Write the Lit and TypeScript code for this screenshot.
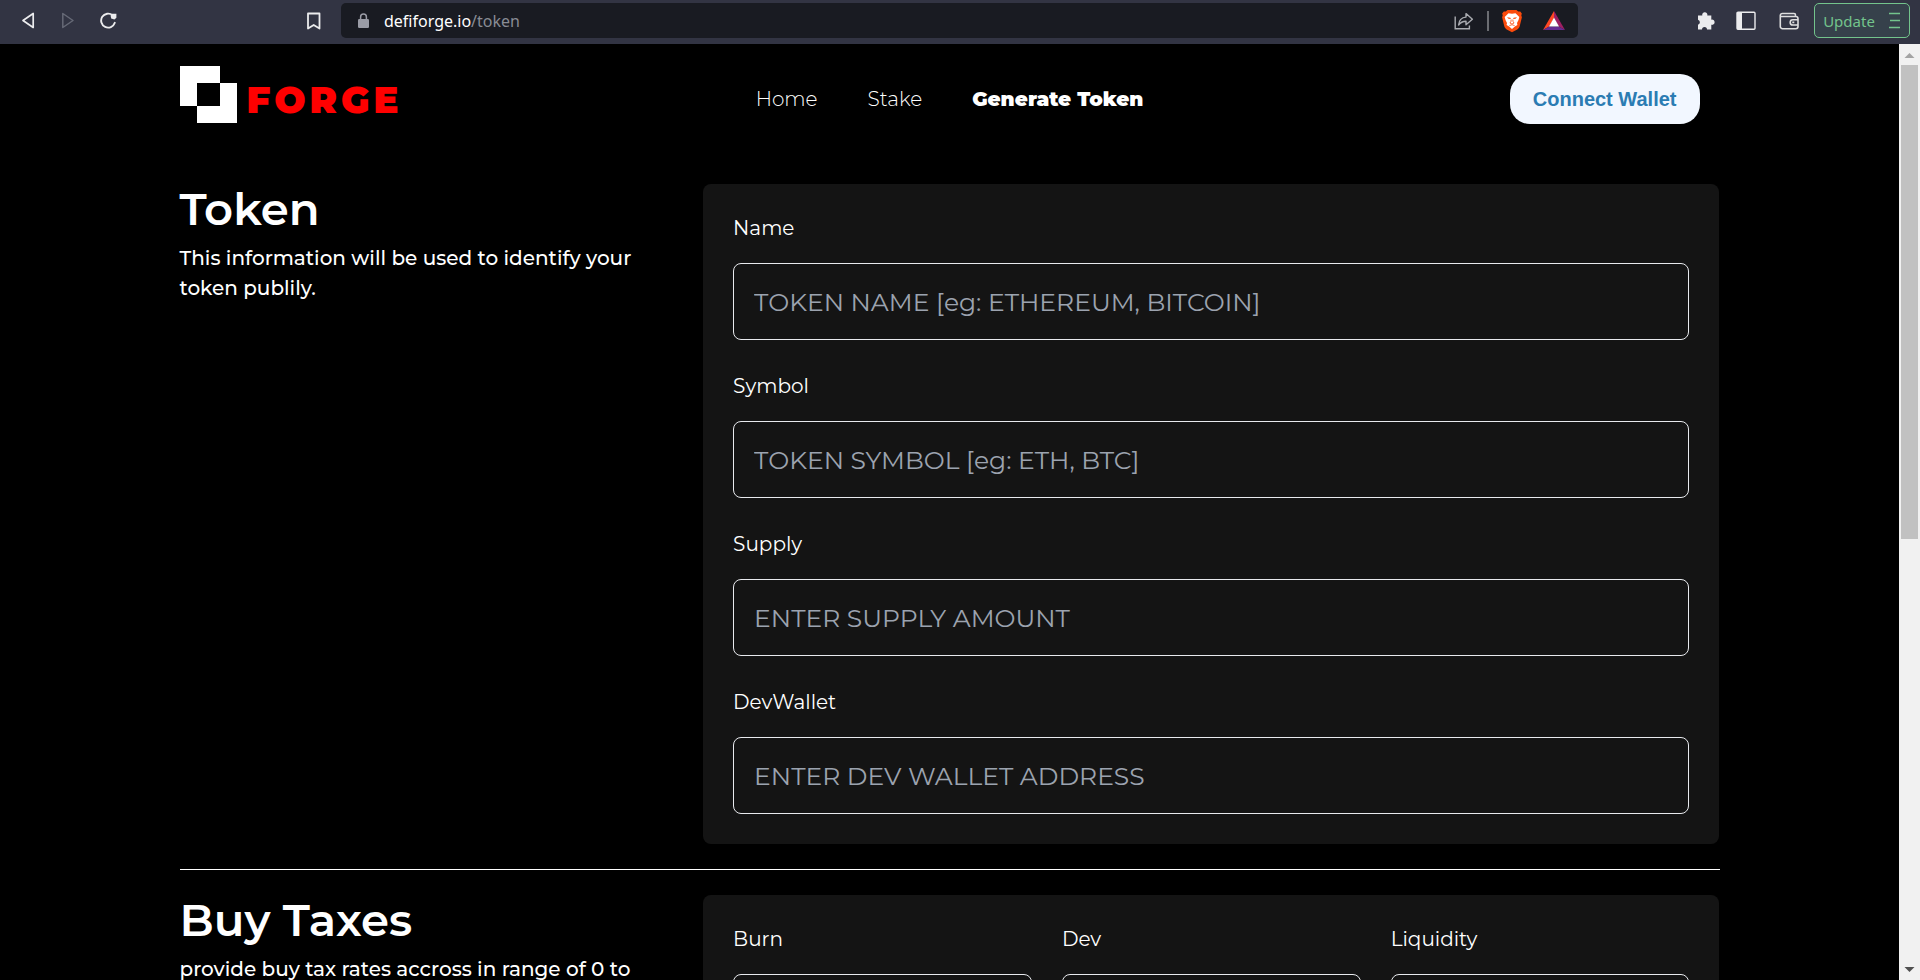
import { LitElement, html, css } from "lit";
import { customElement, property } from "lit/decorators.js";

@customElement("browser-bar")
class BrowserBar extends LitElement {
  static styles = css`
    :host {
      display: flex;
      align-items: flex-start;
      box-sizing: border-box;
      height: 44px;
      padding: 3px 10px 0 20px;
      background: #323443;
      font-family: "Noto Sans", "Open Sans", sans-serif;
    }
    .group {
      display: flex;
      align-items: center;
      height: 35px;
    }
    .nav {
      gap: 24px;
      flex: 0 0 280px;
    }
    .mark {
      flex: 0 0 41px;
    }
    .address {
      display: flex;
      align-items: center;
      flex: 1 1 auto;
      height: 35px;
      box-sizing: border-box;
      padding: 0 12px 0 15px;
      border-radius: 5px;
      background: #191b22;
    }
    .url {
      flex: 1 1 auto;
      min-width: 0;
      margin-left: 13px;
      font-size: 16px;
      color: #888b94;
    }
    .host {
      color: #fff;
    }
    .divider {
      width: 2px;
      height: 20px;
      margin: 0 12px 0 13px;
      background: #6b6d72;
    }
    .bat {
      margin-left: 19px;
    }
    .tools {
      flex: 0 0 auto;
      gap: 20px;
      margin-left: 116px;
    }
    button {
      display: flex;
      align-items: center;
      justify-content: center;
      padding: 0;
      border: 0;
      background: none;
      color: #ececee;
      font: inherit;
    }
    button.update {
      gap: 14px;
      box-sizing: border-box;
      width: 96px;
      height: 35px;
      margin-left: 14px;
      border: 1px solid #73c48c;
      border-radius: 5px;
      background: #36414b;
      color: #73c48c;
      font-size: 15px;
      line-height: 18px;
    }
    svg {
      display: block;
    }
  `;

  render() {
    return html`
      <div class="group nav">
        <button aria-label="Back">
          <svg width="16" height="20" viewBox="0 0 16 20" fill="none" stroke="#ececee" stroke-width="1.7" stroke-linejoin="round"><path d="M13.2 2.500v14L3 9.500z" /></svg>
        </button>
        <button aria-label="Forward">
          <svg width="16" height="20" viewBox="0 0 16 20" fill="none" stroke="#666976" stroke-width="1.5" stroke-linejoin="round"><path d="M2.8 2.500v14L13 9.500z" /></svg>
        </button>
        <button aria-label="Reload">
          <svg width="18" height="20" viewBox="0 0 18 20" fill="none" stroke="#ececee" stroke-width="1.9" stroke-linecap="round"><path d="M12.600 4.200A7 7 0 1 0 14.800 11.800" /><path d="M10.600 4.400l1.400-1.600h4.400v4l-2 1.600-3.200-1z" fill="#ececee" stroke="none" /></svg>
        </button>
      </div>
      <div class="group mark">
        <button aria-label="Bookmark">
          <svg width="28" height="20" viewBox="0 0 28 20" fill="none" stroke="#ececee" stroke-width="1.8" stroke-linejoin="round"><path d="M8 2.500h11.500v15L13.700 14 8 17.500z" /></svg>
        </button>
      </div>
      <div class="address">
        <svg width="15" height="18" viewBox="0 0 15 18"><rect x="2" y="7" width="11" height="9" rx="1.2" fill="#9a9ca6" /><path d="M4.600 7.500V5a2.900 2.900 0 0 1 5.800 0v2.500" fill="none" stroke="#9a9ca6" stroke-width="1.5" /></svg>
        <span class="url"><span class="host">defiforge.io</span>/token</span>
        <button aria-label="Share">
          <svg width="20" height="20" viewBox="0 0 20 20" fill="none" stroke="#a9abb0" stroke-width="1.4"><path d="M1.200 5.500v12.300h14.200v-3.400" /><path d="M4.600 14c.4-4.600 3.100-7.600 7.400-7.900V2.600l6.400 5.700-6.400 5.400v-3.500c-3.200 0-5.600 1.200-7.400 3.800z" stroke-linejoin="round" /></svg>
        </button>
        <span class="divider"></span>
        <button aria-label="Brave Shields">
          <svg width="22" height="24" viewBox="0 0 22 24">
            <path d="M6.500 1h9l1.700 1.600 2-.2 1.600 2.200-.5 2 .6 1.700-2.200 9c-.4 1.500-1.200 2.400-2.400 3.200L11 23.200l-5.300-2.700c-1.200-.8-2-1.700-2.400-3.200L1.100 8.300l.6-1.700-.5-2 1.600-2.200 2 .2z" fill="#fb4b0c" />
            <path d="M7.500 4.200L11 4.800l3.500-.6 3.800 3.700-.8 3.100-1.500 3 .4 2-2.500 1.600-2.900 2.500-2.900-2.500L5.600 16l.4-2-1.500-3-.8-3.100z" fill="#fff" />
            <path d="M6 8.300l3.400.4.500 1.400-2.400-.3zM16 8.300l-3.400.4-.5 1.400 2.400-.3z" fill="#fb4b0c" />
            <path d="M10.200 10.500l-.3 2.300-1 1.200 2.100 1 2.100-1-1-1.200-.3-2.300M8.400 16.600l2.600-.9 2.600.9" fill="none" stroke="#fb4b0c" stroke-width=".8" />
          </svg>
        </button>
        <button class="bat" aria-label="Brave Rewards">
          <svg width="24" height="22" viewBox="0 0 24 22">
            <path d="M12 1v7L7.200 16.500 1 20z" fill="#ff4724" />
            <path d="M12 1l11 19-6.200-3.500L12 8z" fill="#9e1f63" />
            <path d="M1 20l6.200-3.500h9.600L23 20z" fill="#662d91" />
            <path d="M12 7.500l5 9H7z" fill="#fff" />
          </svg>
        </button>
      </div>
      <div class="group tools">
        <button aria-label="Extensions">
          <svg width="22" height="22" viewBox="0 0 22 22"><path d="M4 5.500h4.300a2.600 2.600 0 1 1 5 0h4v4.200a2.600 2.600 0 1 1 0 5v4.800H13a2.500 2.500 0 0 0-5 0H4v-4.700a2.600 2.600 0 0 0 0-5z" fill="#ececee" /></svg>
        </button>
        <button aria-label="Sidebar">
          <svg width="22" height="22" viewBox="0 0 22 22"><rect x="1" y="2.200" width="18" height="17" rx="1" fill="none" stroke="#ececee" stroke-width="1.4" /><path d="M1 2.200h5v17H1z" fill="#ececee" /></svg>
        </button>
        <button aria-label="Wallet">
          <svg width="22" height="22" viewBox="0 0 22 22" fill="none" stroke="#dededf" stroke-width="1.6"><path d="M17.500 6.500V5a1.500 1.500 0 0 0-1.500-1.500H4.300a2 2 0 0 0-2 2v11a2.200 2.200 0 0 0 2.200 2.200h13.300a2.200 2.200 0 0 0 2.200-2.200V8.700a2.200 2.200 0 0 0-2.200-2.200H2.500" /><path d="M20 9.800h-5.200a2.600 2.600 0 0 0 0 5.200H20M14.300 12.400h2" /></svg>
        </button>
      </div>
      <button class="update">
        Update
        <svg width="12" height="18" viewBox="0 0 12 18" stroke="#73c48c" stroke-width="1.6"><path d="M0 1.500h11M1 8.500h10M0 15.500h11" /></svg>
      </button>
    `;
  }
}

@customElement("form-field")
class FormField extends LitElement {
  static styles = css`
    :host {
      display: flex;
      flex-direction: column;
      gap: 20px;
      min-width: 0;
    }
    label {
      font-size: 20px;
      line-height: 29px;
      color: #fff;
    }
    input {
      box-sizing: border-box;
      width: 100%;
      height: 77px;
      padding: 0 20px;
      border: 1px solid #e8eaee;
      border-radius: 8px;
      background: transparent;
      color: #fff;
      font-family: inherit;
      font-size: 25px;
      font-weight: 400;
    }
    input::placeholder {
      color: #9ca3af;
      opacity: 1;
    }
  `;

  @property() label = "";
  @property() hint = "";

  render() {
    return html`
      <label for="field">${this.label}</label>
      <input id="field" type="text" placeholder=${this.hint} />
    `;
  }
}

const tokenFields = [
  ["Name", "TOKEN NAME [eg: ETHEREUM, BITCOIN]"],
  ["Symbol", "TOKEN SYMBOL [eg: ETH, BTC]"],
  ["Supply", "ENTER SUPPLY AMOUNT"],
  ["DevWallet", "ENTER DEV WALLET ADDRESS"],
];
const taxFields = ["Burn", "Dev", "Liquidity"];

@customElement("app-root")
class AppRoot extends LitElement {
  static styles = css`
    :host {
      display: flex;
      flex-direction: column;
      height: 100vh;
      overflow: hidden;
      background: #000;
      color: #fff;
      font-family: Montserrat, Inter, sans-serif;
    }
    .viewport {
      display: flex;
      flex: 1 1 0;
      min-height: 0;
    }
    .page {
      flex: 1 1 auto;
      min-width: 0;
      overflow-y: auto;
      scrollbar-width: none;
    }
    .container {
      max-width: 1540px;
      margin: 0 auto;
    }
    header {
      display: grid;
      grid-template-columns: 1fr auto 1fr;
      align-items: center;
      box-sizing: border-box;
      height: 110px;
      margin-bottom: 30px;
    }
    .brand {
      display: flex;
      align-items: center;
      gap: 10px;
      justify-self: start;
      color: #f00;
      font-size: 37px;
      font-weight: 900;
      line-height: 1;
      letter-spacing: 4px;
      text-decoration: none;
    }
    .logo {
      display: block;
      margin-bottom: 10px;
    }
    nav {
      display: flex;
      gap: 50px;
    }
    nav a {
      color: #fff;
      font-size: 20px;
      font-weight: 300;
      text-decoration: none;
    }
    nav a.active {
      font-weight: 900;
    }
    .connect {
      justify-self: end;
      height: 50px;
      margin-right: 20px;
      padding: 0 23px;
      border: 0;
      border-radius: 20px;
      background: #f2f7ff;
      color: #2b7cb3;
      font: bold 20px "Liberation Sans", Arial, sans-serif;
    }
    .section {
      display: grid;
      grid-template-columns: 34fr 66fr;
    }
    .intro {
      padding-right: 48px;
    }
    h2 {
      margin: 0 0 9px;
      font-size: 45px;
      font-weight: 600;
      line-height: 50px;
    }
    p {
      margin: 0;
      font-size: 20px;
      font-weight: 500;
      line-height: 30px;
    }
    .card {
      display: flex;
      flex-direction: column;
      gap: 32px;
      padding: 30px;
      border-radius: 8px;
      background: #141414;
    }
    .card.taxes {
      display: grid;
      grid-template-columns: repeat(3, 1fr);
      gap: 30px;
    }
    hr {
      height: 1px;
      margin: 25px 0;
      border: 0;
      background: #fff;
    }
    .scrollbar {
      display: flex;
      flex: 0 0 21px;
      flex-direction: column;
      align-items: center;
      background: #f1f1f1;
    }
    .arrow {
      display: block;
      flex: 0 0 21px;
    }
    .track {
      flex: 1 1 auto;
      width: 17px;
    }
    .thumb {
      height: 53%;
      background: #c1c1c1;
    }
  `;

  render() {
    return html`
      <browser-bar></browser-bar>
      <div class="viewport">
        <div class="page">
          <div class="container">
            <header>
              <a class="brand" href="#">
                <svg class="logo" width="57" height="57" viewBox="0 0 57 57"><path fill="#fff" fill-rule="evenodd" d="M0 0h40v17h17v40H17V40H0zM17 17v23h23V17z" /></svg>
                <span>FORGE</span>
              </a>
              <nav>
                <a href="#home">Home</a>
                <a href="#stake">Stake</a>
                <a class="active" href="#token">Generate Token</a>
              </nav>
              <button class="connect">Connect Wallet</button>
            </header>
            <section class="section">
              <div class="intro">
                <h2>Token</h2>
                <p>This information will be used to identify your token publily.</p>
              </div>
              <div class="card">
                ${tokenFields.map(([label, hint]) => html`<form-field .label=${label} .hint=${hint}></form-field>`)}
              </div>
            </section>
            <hr />
            <section class="section">
              <div class="intro">
                <h2>Buy Taxes</h2>
                <p>provide buy tax rates accross in range of 0 to 30</p>
              </div>
              <div class="card taxes">
                ${taxFields.map((label) => html`<form-field .label=${label}></form-field>`)}
              </div>
            </section>
          </div>
        </div>
        <div class="scrollbar">
          <svg class="arrow" width="21" height="21" viewBox="0 0 21 21"><path d="M10.500 9l5 5h-10z" fill="#a3a3a3" /></svg>
          <div class="track"><div class="thumb"></div></div>
          <svg class="arrow" width="21" height="21" viewBox="0 0 21 21"><path d="M10.500 13l5-5h-10z" fill="#505050" /></svg>
        </div>
      </div>
    `;
  }
}
